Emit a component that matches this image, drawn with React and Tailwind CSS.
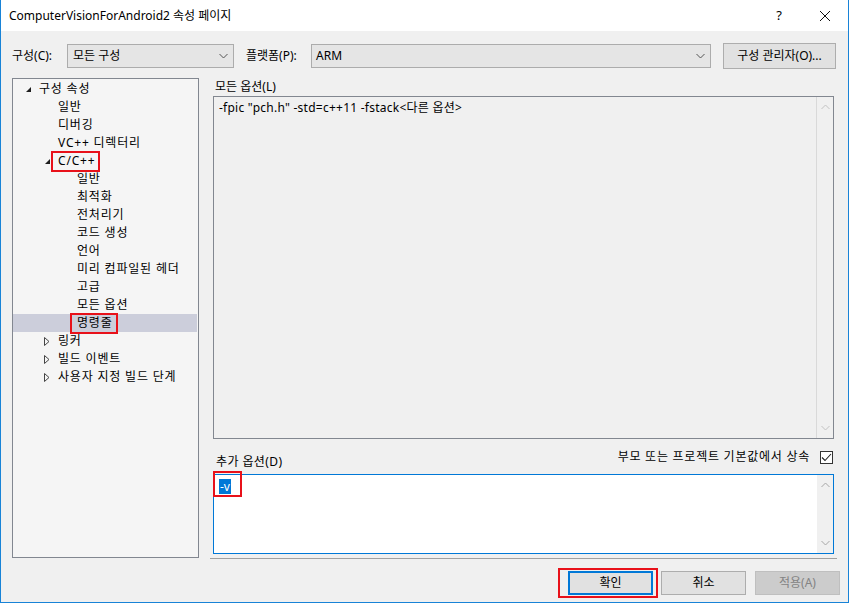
import React from "react"

const FONT = { fontFamily: '"Noto Sans", "Noto Sans CJK KR", sans-serif' }

const Chevron = ({ up, className }) => (
  <svg width="9" height="6" viewBox="0 0 9 6" className={className}>
    <path d={up ? "M0.5 5 L4.5 1 L8.5 5" : "M0.5 1 L4.5 5 L8.5 1"} fill="none" stroke="currentColor" strokeWidth="1" />
  </svg>
)

const Expanded = () => (
  <svg width="7" height="7" viewBox="0 0 7 7">
    <path d="M6 1 L6 6 L1 6 Z" fill="#1e1e1e" />
  </svg>
)

const Collapsed = () => (
  <svg width="6" height="9" viewBox="0 0 6 9">
    <path d="M0.5 0.5 L5 4.5 L0.5 8.5 Z" fill="none" stroke="#444" strokeWidth="1" />
  </svg>
)

const tree = [
  { label: "구성 속성", level: 0, icon: "open" },
  { label: "일반", level: 1 },
  { label: "디버깅", level: 1 },
  { label: "VC++ 디렉터리", level: 1 },
  { label: "C/C++", level: 1, icon: "open", boxed: true },
  { label: "일반", level: 2 },
  { label: "최적화", level: 2 },
  { label: "전처리기", level: 2 },
  { label: "코드 생성", level: 2 },
  { label: "언어", level: 2 },
  { label: "미리 컴파일된 헤더", level: 2 },
  { label: "고급", level: 2 },
  { label: "모든 옵션", level: 2 },
  { label: "명령줄", level: 2, selected: true, boxed: true },
  { label: "링커", level: 1, icon: "closed" },
  { label: "빌드 이벤트", level: 1, icon: "closed" },
  { label: "사용자 지정 빌드 단계", level: 1, icon: "closed" },
]

const indent = ["pl-[8px]", "pl-[27px]", "pl-[46px]"]

const TreeRow = ({ item }) => (
  <div className={`h-[18px] flex items-center ${indent[item.level]} ${item.selected ? "bg-[#cccedb] mr-px" : ""}`}>
    <div className="w-[15px] flex items-center justify-start pl-[4px]">
      {item.icon === "open" && <Expanded />}
      {item.icon === "closed" && <Collapsed />}
    </div>
    <div className="relative pl-[3px]">
      {item.boxed && (
        <div className="absolute left-[-4px] right-[-5px] top-[-1px] bottom-[-2px] border-2 border-[#e8111a]" />
      )}
      <span className="relative tracking-[0.8px]">{item.label}</span>
    </div>
  </div>
)

const Button = ({ children, primary, disabled }) => (
  <div
    className={`w-[85px] h-[24px] flex items-center justify-center text-[12px] ${
      primary ? "border-2 border-[#0078d7] bg-[#e1e1e1]" : disabled ? "border border-[#bfbfbf] bg-[#cccccc] text-[#838383]" : "border border-[#adadad] bg-[#e1e1e1]"
    }`}
  >
    {children}
  </div>
)

export default function App() {
  return (
    <div className="w-[849px] h-[603px] bg-[#f0f0f0] border-x border-b border-[#1883d7] flex flex-col text-[12px] text-[#000] overflow-hidden" style={FONT}>
      {/* Title bar */}
      <div className="h-[31px] bg-white flex items-center pl-[8px] shrink-0">
        <span className="text-[12px]">ComputerVisionForAndroid2 속성 페이지</span>
        <div className="ml-auto flex items-center">
          <span className="w-[46px] text-center text-[13px]">?</span>
          <svg width="46" height="12" viewBox="0 0 46 12">
            <path d="M18 1 L28 11 M28 1 L18 11" stroke="#111" strokeWidth="1" />
          </svg>
        </div>
      </div>

      {/* Config row */}
      <div className="flex items-center pl-[11px] pr-[12px] mt-[12px] h-[26px] shrink-0">
        <span className="w-[55px]">구성(C):</span>
        <div className="w-[167px] h-[24px] border border-[#acacac] bg-[#e5e5e5] flex items-center pl-[5px] pr-[5px]">
          <span>모든 구성</span>
          <Chevron className="ml-auto text-[#555]" />
        </div>
        <span className="ml-[12px] w-[65px]">플랫폼(P):</span>
        <div className="w-[400px] h-[24px] border border-[#acacac] bg-[#e5e5e5] flex items-center pl-[4px] pr-[5px]">
          <span>ARM</span>
          <Chevron className="ml-auto text-[#555]" />
        </div>
        <div className="ml-auto w-[113px] h-[26px] border border-[#adadad] bg-[#e1e1e1] flex items-center justify-center">
          구성 관리자(O)...
        </div>
      </div>

      {/* Main */}
      <div className="flex items-start pl-[11px] mt-[9px] h-[480px] shrink-0">
        <div className="w-[187px] h-[480px] border border-[#828790] bg-[#f5f5f5] pt-[1px]">
          {tree.map((item, i) => (
            <TreeRow key={i} item={item} />
          ))}
        </div>

        <div className="ml-[14px] w-[621px] flex flex-col">
          <div className="h-[18px] pl-[2px] flex items-center">모든 옵션(L)</div>
          <div className="h-[343px] border border-[#828790] bg-[#f0f0f0] flex">
            <div className="flex-1 pl-[5px] pt-[2px] tracking-[0.25px]">-fpic "pch.h" -std=c++11 -fstack&lt;다른 옵션&gt;</div>
            <div className="w-[17px] border-l border-[#d9d9d9] flex flex-col items-center justify-between py-[7px] text-[#c2c2c2]">
              <Chevron up />
              <Chevron />
            </div>
          </div>
          <div className="h-[35px] flex justify-between">
            <div className="self-end pb-[4px] pl-[3px] leading-[16px] tracking-[0.4px]">추가 옵션(D)</div>
            <div className="self-start mt-[9px] flex items-center pr-[1px]">
              <span className="mr-[10px] tracking-[0.75px]">부모 또는 프로젝트 기본값에서 상속</span>
              <div className="w-[13px] h-[13px] border border-[#333] bg-white flex items-center justify-center">
                <svg width="11" height="9" viewBox="0 0 11 9">
                  <path d="M1 4.5 L4 7.5 L10 1" fill="none" stroke="#222" strokeWidth="1.1" />
                </svg>
              </div>
            </div>
          </div>
          <div className="h-[80px] border border-[#0078d7] bg-white flex">
            <div className="flex-1 pl-[5px] pt-[3px]">
              <div className="relative inline-block">
                <div className="absolute left-[-6px] top-[-7px] w-[29px] h-[26px] border-2 border-[#e8111a]" />
                <span className="relative bg-[#0078d7] text-white px-[1px] leading-[15px] inline-block">-v</span>
              </div>
            </div>
            <div className="w-[16px] bg-[#f0f0f0] flex flex-col items-center justify-between py-[7px] text-[#a6a6a6]">
              <Chevron up />
              <Chevron />
            </div>
          </div>
        </div>
      </div>

      <div className="ml-[209px] mr-[11px] h-px bg-[#a0a0a0] shrink-0" />

      {/* Buttons */}
      <div className="flex justify-end items-center pr-[8px] mt-[9px] shrink-0">
        <div className="pl-[8px] pr-[3px] py-[1px] border-2 border-[#e8111a]">
          <Button primary>확인</Button>
        </div>
        <div className="ml-[3px]">
          <Button>취소</Button>
        </div>
        <div className="ml-[9px]">
          <Button disabled>적용(A)</Button>
        </div>
      </div>
    </div>
  )
}
